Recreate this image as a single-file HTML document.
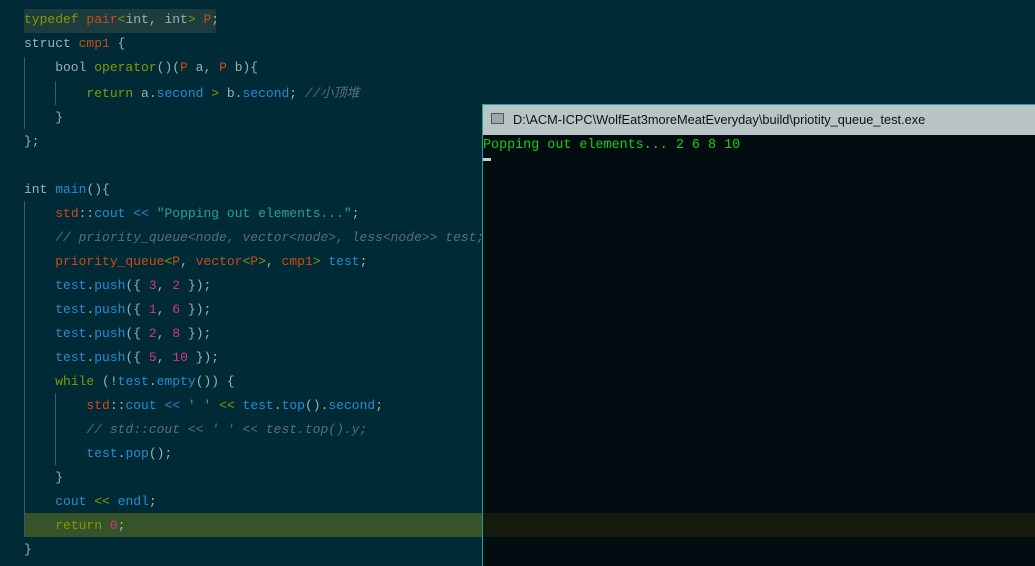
<!DOCTYPE html>
<html><head><meta charset="utf-8"><style>
body{margin:0;width:1035px;height:565px;background:#002b36;overflow:hidden;position:relative;font-family:"Liberation Mono",monospace}
.code{position:absolute;left:24px;top:8px;font-size:13px;line-height:24px;color:#9fb0b0;white-space:pre}
.k{color:#859900}.r{color:#cb4b16}.b{color:#268bd2}.n{color:#d33682}.s{color:#2aa198}.c{color:#586e75;font-style:italic}
.g{position:absolute;width:1px;background:#3d5a60}
.con{position:absolute;left:482px;top:104px;width:553px;height:461px;background:#010c10;border-left:1px solid #1fa398;border-top:1px solid #1fa398}
.tb{height:30px;background:#b8c4c6;font-family:"Liberation Sans","Noto Sans CJK SC",sans-serif;font-size:12.8px;color:#111;line-height:30px;padding-left:30px;position:relative}
.ct{color:#10d010;font-size:13.4px;padding-left:0;line-height:18px;margin-top:2px;white-space:pre}
</style></head><body>
<div style="position:absolute;left:24px;top:9px;width:192px;height:24px;background:#1c3c3e;border-radius:2px"></div>
<div style="position:absolute;left:24px;top:513px;width:458px;height:24px;background:#37532a"></div>
<div style="position:absolute;left:483px;top:513px;width:552px;height:24px;background:#141a0e;z-index:2"></div>
<div class="g" style="left:24px;top:57px;height:72px"></div>
<div class="g" style="left:55px;top:81px;height:24px"></div>
<div class="g" style="left:24px;top:201px;height:336px"></div>
<div class="g" style="left:55px;top:393px;height:72px"></div>
<div class="code"><span class="k">typedef</span> <span class="r">pair</span><span class="k">&lt;</span>int, int<span class="k">&gt;</span> <span class="r">P</span>;
struct <span class="r">cmp1</span> {
    bool <span class="k">operator</span>()(<span class="r">P</span> a, <span class="r">P</span> b){
        <span class="k">return</span> a.<span class="b">second</span> <span class="k">&gt;</span> b.<span class="b">second</span>; <span class="c">//<span style="font-family:'Noto Sans CJK SC',sans-serif">小顶堆</span></span>
    }
};

int <span class="b">main</span>(){
    <span class="r">std</span>::<span class="b">cout</span> <span class="b">&lt;&lt;</span> <span class="s">"Popping out elements..."</span>;
    <span class="c">// priority_queue&lt;node, vector&lt;node&gt;, less&lt;node&gt;&gt; test;</span>
    <span class="r">priority_queue</span><span class="k">&lt;</span><span class="r">P</span>, <span class="r">vector</span><span class="k">&lt;</span><span class="r">P</span><span class="k">&gt;</span>, <span class="r">cmp1</span><span class="k">&gt;</span> <span class="b">test</span>;
    <span class="b">test</span>.<span class="b">push</span>({ <span class="n">3</span>, <span class="n">2</span> });
    <span class="b">test</span>.<span class="b">push</span>({ <span class="n">1</span>, <span class="n">6</span> });
    <span class="b">test</span>.<span class="b">push</span>({ <span class="n">2</span>, <span class="n">8</span> });
    <span class="b">test</span>.<span class="b">push</span>({ <span class="n">5</span>, <span class="n">10</span> });
    <span class="k">while</span> (!<span class="b">test</span>.<span class="b">empty</span>()) {
        <span class="r">std</span>::<span class="b">cout</span> <span class="b">&lt;&lt;</span> <span class="s">' '</span> <span class="k">&lt;&lt;</span> <span class="b">test</span>.<span class="b">top</span>().<span class="b">second</span>;
        <span class="c">// std::cout &lt;&lt; ' ' &lt;&lt; test.top().y;</span>
        <span class="b">test</span>.<span class="b">pop</span>();
    }
    <span class="b">cout</span> <span class="k">&lt;&lt;</span> <span class="b">endl</span>;
    <span class="k">return</span> <span class="n">0</span>;
}</div>
<div class="con">
<div class="tb"><span style="position:absolute;left:8px;top:8px;width:13px;height:11px;border:1px solid #555;background:#9aa;box-sizing:border-box"></span>D:\ACM-ICPC\WolfEat3moreMeatEveryday\build\priotity_queue_test.exe</div>
<div class="ct">Popping out elements... 2 6 8 10</div>
<div style="width:8px;height:3px;background:#ccc;margin-top:3px"></div>
</div>
</body></html>
